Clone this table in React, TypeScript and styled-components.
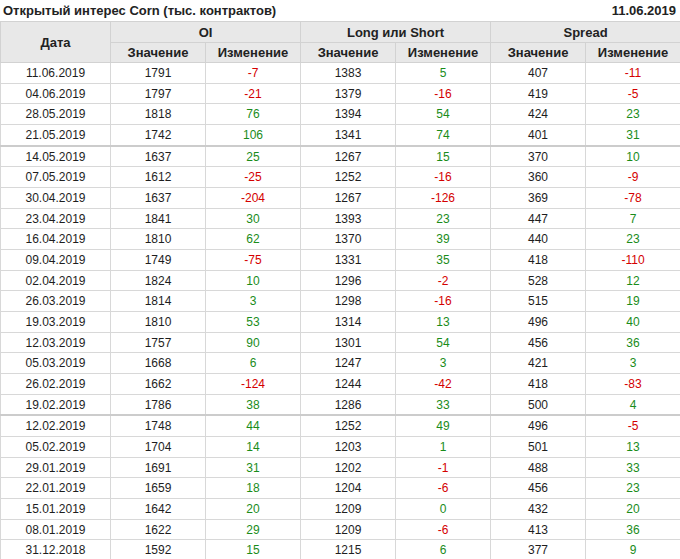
import React from "react";
import styled, { createGlobalStyle } from "styled-components";

const Global = createGlobalStyle`
  html, body { margin: 0; padding: 0; background: #fff; }
  body { font-family: "Liberation Sans", Arial, sans-serif; color: #222; }
`;

const Page = styled.div`
  width: 680px;
`;

const TitleBar = styled.div`
  display: flex;
  justify-content: space-between;
  align-items: center;
  height: 21px;
  padding: 0 4px 0 3px;
  box-sizing: border-box;
  font-weight: bold;
  font-size: 13px;
  color: #222;
`;

const Table = styled.table`
  width: 680px;
  border-collapse: collapse;
  table-layout: fixed;
  font-size: 12px;
`;

const Th = styled.th<{ $h?: number }>`
  background: #e8e8e8;
  border: 1px solid #d2d2d2;
  font-weight: bold;
  font-size: 13px;
  color: #222;
  text-align: center;
  vertical-align: middle;
  padding: 0;
  height: ${(p) => p.$h ?? 20}px;
`;

const Tr = styled.tr<{ $thick?: boolean }>`
  & > td {
    border-bottom: ${(p) => (p.$thick ? "2px solid #cccccc" : "1px solid #d8d8d8")};
  }
`;

const Td = styled.td<{ $tone?: "pos" | "neg" }>`
  border-left: 1px solid #d8d8d8;
  border-right: 1px solid #d8d8d8;
  height: 19.68px;
  padding: 0;
  text-align: center;
  vertical-align: middle;
  color: ${(p) => (p.$tone === "pos" ? "#1a8c1a" : p.$tone === "neg" ? "#d40000" : "#1e1e1e")};
`;

type Row = [string, number, number, number, number, number, number];

const rows: Row[] = [
  ["11.06.2019", 1791, -7, 1383, 5, 407, -11],
  ["04.06.2019", 1797, -21, 1379, -16, 419, -5],
  ["28.05.2019", 1818, 76, 1394, 54, 424, 23],
  ["21.05.2019", 1742, 106, 1341, 74, 401, 31],
  ["14.05.2019", 1637, 25, 1267, 15, 370, 10],
  ["07.05.2019", 1612, -25, 1252, -16, 360, -9],
  ["30.04.2019", 1637, -204, 1267, -126, 369, -78],
  ["23.04.2019", 1841, 30, 1393, 23, 447, 7],
  ["16.04.2019", 1810, 62, 1370, 39, 440, 23],
  ["09.04.2019", 1749, -75, 1331, 35, 418, -110],
  ["02.04.2019", 1824, 10, 1296, -2, 528, 12],
  ["26.03.2019", 1814, 3, 1298, -16, 515, 19],
  ["19.03.2019", 1810, 53, 1314, 13, 496, 40],
  ["12.03.2019", 1757, 90, 1301, 54, 456, 36],
  ["05.03.2019", 1668, 6, 1247, 3, 421, 3],
  ["26.02.2019", 1662, -124, 1244, -42, 418, -83],
  ["19.02.2019", 1786, 38, 1286, 33, 500, 4],
  ["12.02.2019", 1748, 44, 1252, 49, 496, -5],
  ["05.02.2019", 1704, 14, 1203, 1, 501, 13],
  ["29.01.2019", 1691, 31, 1202, -1, 488, 33],
  ["22.01.2019", 1659, 18, 1204, -6, 456, 23],
  ["15.01.2019", 1642, 20, 1209, 0, 432, 20],
  ["08.01.2019", 1622, 29, 1209, -6, 413, 36],
  ["31.12.2018", 1592, 15, 1215, 6, 377, 9],
];

const thickAfter = new Set(["21.05.2019", "19.02.2019"]);

const tone = (n: number) => (n < 0 ? "neg" : "pos");

export default function App() {
  return (
    <Page>
      <Global />
      <TitleBar>
        <span>Открытый интерес Corn (тыс. контрактов)</span>
        <span>11.06.2019</span>
      </TitleBar>
      <Table>
        <colgroup>
          <col style={{ width: 110 }} />
          <col style={{ width: 95 }} />
          <col style={{ width: 95 }} />
          <col style={{ width: 95 }} />
          <col style={{ width: 95 }} />
          <col style={{ width: 95 }} />
          <col style={{ width: 95 }} />
        </colgroup>
        <thead>
          <tr>
            <Th rowSpan={2}>Дата</Th>
            <Th colSpan={2} $h={20}>OI</Th>
            <Th colSpan={2} $h={20}>Long или Short</Th>
            <Th colSpan={2} $h={20}>Spread</Th>
          </tr>
          <tr>
            <Th $h={19}>Значение</Th>
            <Th $h={19}>Изменение</Th>
            <Th $h={19}>Значение</Th>
            <Th $h={19}>Изменение</Th>
            <Th $h={19}>Значение</Th>
            <Th $h={19}>Изменение</Th>
          </tr>
        </thead>
        <tbody>
          {rows.map((r) => (
            <Tr key={r[0]} $thick={thickAfter.has(r[0])}>
              <Td>{r[0]}</Td>
              <Td>{r[1]}</Td>
              <Td $tone={tone(r[2])}>{r[2]}</Td>
              <Td>{r[3]}</Td>
              <Td $tone={tone(r[4])}>{r[4]}</Td>
              <Td>{r[5]}</Td>
              <Td $tone={tone(r[6])}>{r[6]}</Td>
            </Tr>
          ))}
        </tbody>
      </Table>
    </Page>
  );
}
